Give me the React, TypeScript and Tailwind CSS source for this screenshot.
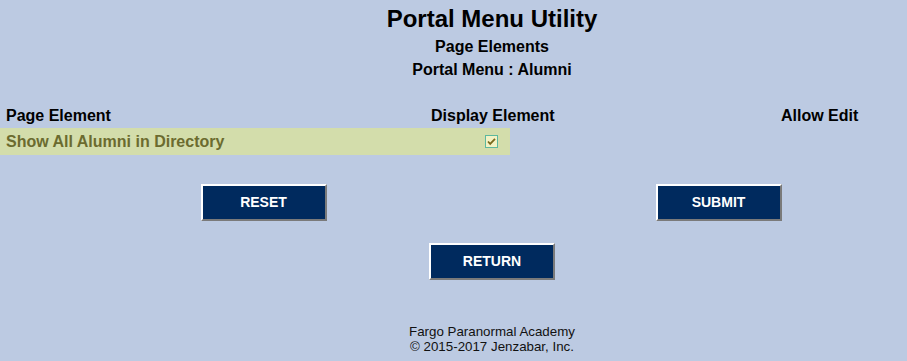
export default function App() {
  const btn =
    'w-[126px] h-[37px] bg-[#002a5e] text-white font-bold text-[14px] border-2 border-t-white border-l-white border-r-[#7a7a7a] border-b-[#7a7a7a] flex items-center justify-center'

  return (
    <div className="w-[907px] h-[361px] overflow-hidden bg-[#bccae2] font-['Liberation_Sans',Arial,sans-serif] text-black">
      <div className="w-[984px] flex flex-col">
        {/* Title block */}
        <div className="mt-[5px] text-center text-[24px] leading-[28px] font-bold">Portal Menu Utility</div>
        <div className="mt-[2px] text-center text-[16px] leading-[23px] font-bold">Page Elements</div>
        <div className="text-center text-[16px] leading-[23px] font-bold">Portal Menu : Alumni</div>

        {/* Column headers */}
        <div className="mt-[26px] h-[21px] flex items-start pl-[6px] text-[16px] leading-[18px] font-bold whitespace-nowrap">
          <span className="w-[425px]">Page Element</span>
          <span className="w-[123px] text-center">Display Element</span>
          <span className="ml-[227px]">Allow Edit</span>
        </div>

        {/* Data row */}
        <div className="w-[510px] h-[27px] bg-[#d3ddab] flex items-center pl-[6px] pr-[12px]">
          <span className="text-[16px] leading-[18px] font-bold text-[#6b6b2f]">Show All Alumni in Directory</span>
          <svg className="ml-auto" width="13" height="13" viewBox="0 0 13 13">
            <rect x="0.5" y="0.5" width="12" height="12" fill="#f3f2c4" stroke="#5cb89e" />
            <path d="M3 6.5l2.2 2.4L10 3.8" fill="none" stroke="#7a6a1e" strokeWidth="1.8" />
          </svg>
        </div>

        {/* Buttons */}
        <div className="mt-[29px] ml-[36px] w-[910px] grid grid-cols-2">
          <div className="flex justify-center">
            <button className={btn}>RESET</button>
          </div>
          <div className="flex justify-center">
            <button className={btn}>SUBMIT</button>
          </div>
        </div>
        <div className="mt-[22px] flex justify-center">
          <button className={btn}>RETURN</button>
        </div>

        {/* Footer */}
        <div className="mt-[44px] text-center text-[13.33px] leading-[15px] text-[#111]">
          <div>Fargo Paranormal Academy</div>
          <div>© 2015-2017 Jenzabar, Inc.</div>
        </div>
      </div>
    </div>
  )
}
